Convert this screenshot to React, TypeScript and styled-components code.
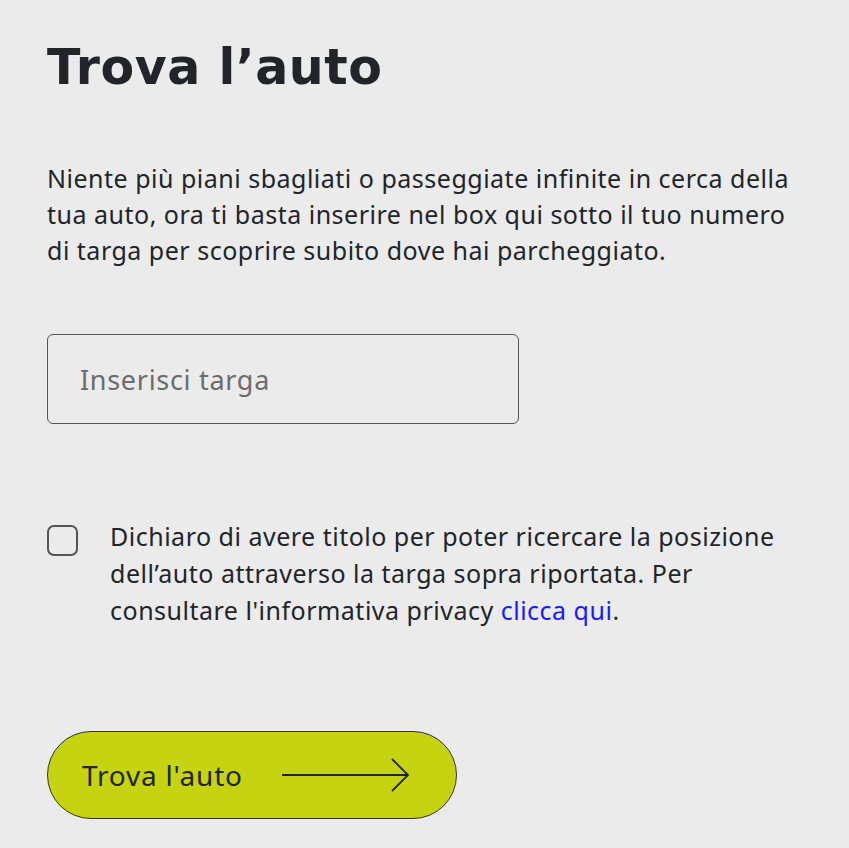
import React from "react";
import styled, { createGlobalStyle } from "styled-components";

const Global = createGlobalStyle`
  html, body { margin: 0; padding: 0; background: #ebebeb; }
  body { font-family: "Noto Sans", "Open Sans", sans-serif; color: #212529; }
`;

const Page = styled.main`
  width: 849px;
  min-height: 848px;
  box-sizing: border-box;
  padding: 38px 30px 0 47px;
  display: flex;
  flex-direction: column;
`;

const Title = styled.h1`
  margin: 0;
  font-family: "DejaVu Sans", sans-serif;
  font-weight: 700;
  font-size: 49px;
  line-height: 60px;
  letter-spacing: 0.6px;
  color: #212529;
`;

const Intro = styled.p`
  margin: 62px 0 0;
  font-size: 25px;
  line-height: 36px;
  letter-spacing: 0.5px;
  color: #212529;
  width: 765px;
`;

const Field = styled.input`
  margin-top: 66px;
  width: 472px;
  height: 90px;
  box-sizing: border-box;
  border: 1.5px solid #555;
  border-radius: 6px;
  background: transparent;
  padding: 0 32px;
  font-family: inherit;
  font-size: 27px;
  letter-spacing: 0.7px;
  color: #212529;
  outline: none;
  &::placeholder { color: #6c6c6c; }
`;

const Consent = styled.label`
  margin-top: 94px;
  display: flex;
  gap: 32px;
  align-items: flex-start;
`;

const Box = styled.span`
  flex: none;
  width: 31px;
  height: 31px;
  box-sizing: border-box;
  border: 2px solid #555;
  border-radius: 7px;
  margin-top: 7px;
`;

const ConsentText = styled.span`
  font-size: 25px;
  line-height: 37px;
  letter-spacing: 0.5px;
  color: #212529;
  width: 680px;
`;

const Link = styled.a`
  color: #1a1aff;
  text-decoration: none;
`;

const Button = styled.button`
  margin-top: 102px;
  width: 410px;
  height: 88px;
  box-sizing: border-box;
  border: 1.5px solid #333;
  border-radius: 44px;
  background: #c5d311;
  display: flex;
  align-items: center;
  gap: 38px;
  padding: 0 0 0 34px;
  font-family: inherit;
  font-size: 28px;
  letter-spacing: 0.8px;
  color: #212529;
  cursor: pointer;
`;

export default function App() {
  return (
    <>
      <Global />
      <Page>
        <Title>Trova l’auto</Title>
        <Intro>
          Niente più piani sbagliati o passeggiate infinite in cerca della tua
          auto, ora ti basta inserire nel box qui sotto il tuo numero di targa
          per scoprire subito dove hai parcheggiato.
        </Intro>
        <Field placeholder="Inserisci targa" />
        <Consent>
          <Box />
          <ConsentText>
            Dichiaro di avere titolo per poter ricercare la posizione
            dell’auto attraverso la targa sopra riportata. Per consultare
            l'informativa privacy <Link href="#">clicca qui</Link>.
          </ConsentText>
        </Consent>
        <Button>
          <span>Trova l'auto</span>
          <svg width="130" height="34" viewBox="0 0 130 34" fill="none">
            <path d="M1 17H127" stroke="#212529" strokeWidth="1.8" />
            <path d="M111 1L127 17L111 33" stroke="#212529" strokeWidth="1.8" />
          </svg>
        </Button>
      </Page>
    </>
  );
}
